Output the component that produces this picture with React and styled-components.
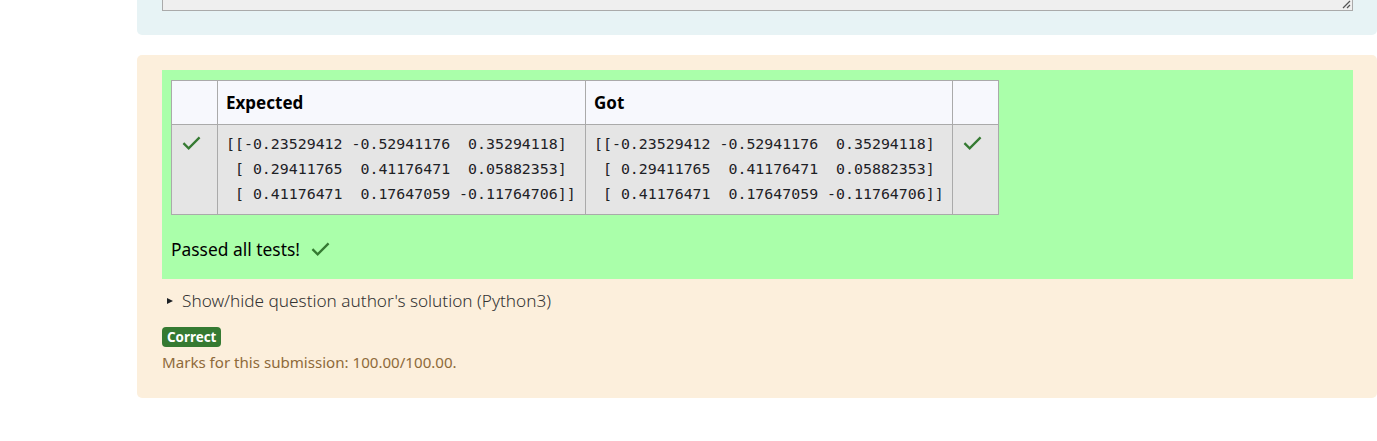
import React from "react";
import styled, { createGlobalStyle } from "styled-components";

const GlobalStyle = createGlobalStyle`
  html, body {
    margin: 0;
    padding: 0;
    background: #fff;
    overflow: hidden;
  }
  body {
    font-family: "Noto Sans", "Open Sans", sans-serif;
    color: #1d2125;
  }
`;

const Page = styled.div`
  width: 1240px;
  margin-left: 137px;
  display: flex;
  flex-direction: column;
  gap: 21px;
`;

const AnswerPanel = styled.div`
  background: #e7f3f5;
  border-radius: 0 0 5px 5px;
  padding: 0 24px 24px 25px;
  margin-top: -58px;
`;

const AnswerBox = styled.div`
  position: relative;
  height: 68px;
  background: #efefef;
  border: 1px solid #aaa;
  border-top: none;
`;

const Grip = styled.svg`
  position: absolute;
  right: 1px;
  bottom: 1px;
`;

const FeedbackPanel = styled.div`
  background: #fcefdc;
  border-radius: 5px;
  padding: 15px 24px 26px 25px;
  margin-top: -1px;
`;

const ResultBox = styled.div`
  background: #aaffaa;
  padding: 10px 9px 0 9px;
  height: 209px;
  box-sizing: border-box;
`;

const Table = styled.table`
  border-collapse: collapse;
  width: 828px;
`;

const HeadCell = styled.th`
  background: #f7f8fd;
  border: 1px solid #aaa;
  height: 44px;
  padding: 0 8px;
  text-align: left;
  font-size: 17px;
  font-weight: 700;
  color: #000;
  width: ${(p) => p.$w}px;
  box-sizing: border-box;
`;

const Cell = styled.td`
  background: #e5e5e5;
  border: 1px solid #aaa;
  padding: ${(p) => (p.$icon ? "8px 8px 7px 10px" : "7px 8px 7px 8px")};
  vertical-align: top;
  text-align: left;
`;

const Mono = styled.pre`
  margin: 0;
  font-family: "DejaVu Sans Mono", "Liberation Mono", monospace;
  font-size: 14.9px;
  line-height: 25px;
  color: #1d2125;
  white-space: pre;
`;

const Passed = styled.div`
  display: flex;
  align-items: center;
  gap: 11px;
  height: 68px;
  font-size: 17.4px;
  color: #000;
`;

const Toggle = styled.div`
  display: flex;
  align-items: center;
  gap: 9px;
  margin-top: 10px;
  padding-left: 5px;
  font-size: 17.2px;
  font-weight: 300;
  color: #333;
`;

const Triangle = styled.span`
  display: inline-block;
  width: 0;
  height: 0;
  border-top: 3.5px solid transparent;
  border-bottom: 3.5px solid transparent;
  border-left: 6px solid #1d2125;
`;

const Badge = styled.span`
  display: inline-block;
  margin-top: 15px;
  background: #357a32;
  color: #fff;
  font-size: 13.4px;
  font-weight: 700;
  line-height: 20px;
  padding: 0 5px;
  border-radius: 4px;
`;

const Marks = styled.div`
  margin-top: 5px;
  font-size: 15.1px;
  color: #8e6a3a;
`;

const Footer = styled.div`
  display: flex;
  justify-content: flex-end;
  padding-right: 24px;
  margin-top: 17px;
  font-size: 15px;
  color: #0f6cbf;
`;

const Check = ({ size = 19 }) => (
  <svg width={size} height={size * 0.75} viewBox="0 0 20 15">
    <polyline
      points="1.5,7.5 7,13 18.5,1.5"
      fill="none"
      stroke="#357a32"
      strokeWidth="2.4"
    />
  </svg>
);

const matrix = `[[-0.23529412 -0.52941176  0.35294118]
 [ 0.29411765  0.41176471  0.05882353]
 [ 0.41176471  0.17647059 -0.11764706]]`;

export default function App() {
  return (
    <>
      <GlobalStyle />
      <Page>
        <AnswerPanel>
          <AnswerBox>
            <Grip width="10" height="10" viewBox="0 0 10 10">
              <line x1="9" y1="2" x2="2" y2="9" stroke="#555" strokeWidth="1.2" />
              <line x1="9" y1="6" x2="6" y2="9" stroke="#555" strokeWidth="1.2" />
            </Grip>
          </AnswerBox>
        </AnswerPanel>
        <FeedbackPanel>
          <ResultBox>
            <Table>
              <thead>
                <tr>
                  <HeadCell $w={46}></HeadCell>
                  <HeadCell $w={368}>Expected</HeadCell>
                  <HeadCell $w={367}>Got</HeadCell>
                  <HeadCell $w={46}></HeadCell>
                </tr>
              </thead>
              <tbody>
                <tr>
                  <Cell $icon>
                    <Check />
                  </Cell>
                  <Cell>
                    <Mono>{matrix}</Mono>
                  </Cell>
                  <Cell>
                    <Mono>{matrix}</Mono>
                  </Cell>
                  <Cell $icon>
                    <Check />
                  </Cell>
                </tr>
              </tbody>
            </Table>
            <Passed>
              Passed all tests! <Check />
            </Passed>
          </ResultBox>
          <Toggle>
            <Triangle />
            Show/hide question author's solution (Python3)
          </Toggle>
          <Badge>Correct</Badge>
          <Marks>Marks for this submission: 100.00/100.00.</Marks>
        </FeedbackPanel>
        <Footer>Finish review</Footer>
      </Page>
    </>
  );
}
